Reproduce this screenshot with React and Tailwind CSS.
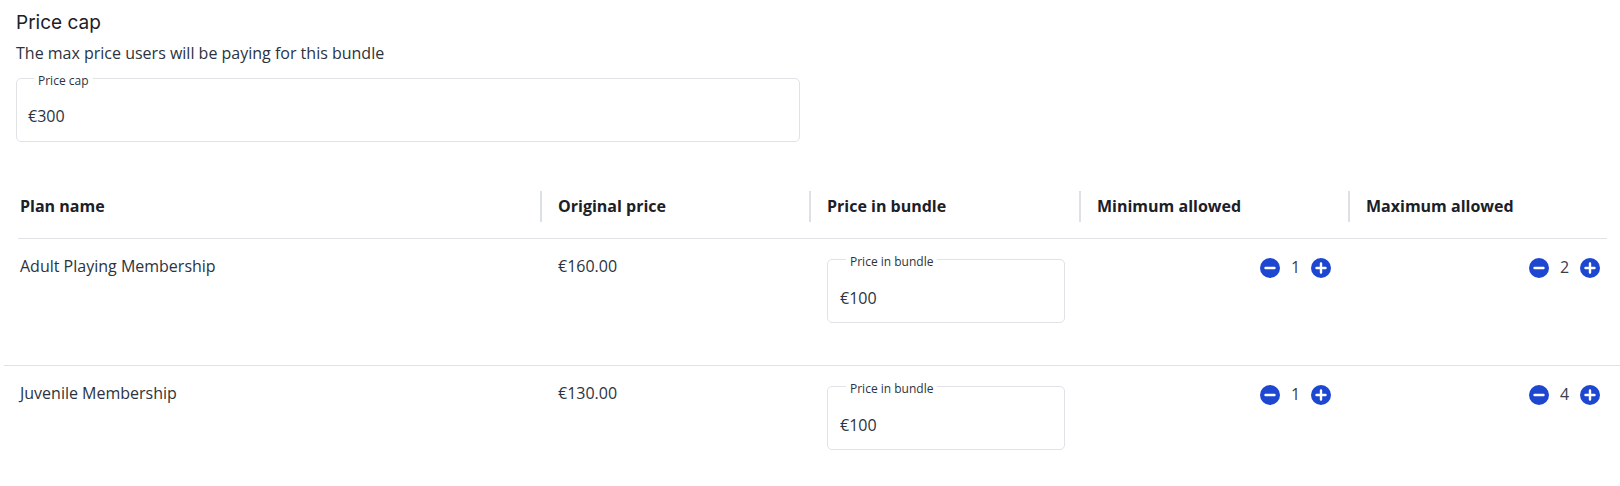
import React from "react";

const body = "font-['Open_Sans',sans-serif]";

function PriceField({ label, value, className, inset }) {
  return (
    <fieldset className={`border border-[#e0e2e6] rounded-[5px] m-0 h-[71px] ${inset ? "px-[12px]" : "px-[11px]"} ${className}`}>
      <legend className="ml-[6px] px-[4px] text-[12px] leading-[14px] text-[#2b3340]">
        <span className="relative top-[3px]">{label}</span>
      </legend>
      <div className={`${inset ? "pt-[22px]" : "pt-[21px]"} text-[16px] leading-[20px] text-[#2b3340]`}>{value}</div>
    </fieldset>
  );
}

function RoundButton({ plus }) {
  return (
    <svg width="20" height="20" viewBox="0 0 20 20" className="shrink-0">
      <circle cx="10" cy="10" r="10" fill="#1d47d1" />
      <path d={plus ? "M5.5 10h9M10 5.5v9" : "M5.5 10h9"} stroke="#fff" strokeWidth="2.4" strokeLinecap="round" />
    </svg>
  );
}

function Stepper({ value, className }) {
  return (
    <div className={`flex items-center justify-end ${className}`}>
      <RoundButton />
      <span className="w-[31px] text-center text-[16px] leading-[20px] text-[#3a404a] -mt-[3px]">{value}</span>
      <RoundButton plus />
    </div>
  );
}

function HeaderCell({ children, first }) {
  return (
    <div className={`h-[31px] flex items-center font-bold text-[16px] text-[#1c2027] ${first ? "pl-[2px]" : "pl-[16px] border-l-2 border-[#dde0e5]"}`}>
      <span className="-mt-[2px]">{children}</span>
    </div>
  );
}

const plans = [
  { name: "Adult Playing Membership", price: "€160.00", min: 1, max: 2 },
  { name: "Juvenile Membership", price: "€130.00", min: 1, max: 4 },
];

const cols = "grid grid-cols-[522px_269px_270px_269px_259px]";

export default function App() {
  return (
    <div className={`h-[486px] w-[1620px] bg-white overflow-hidden ${body}`}>
      <div className="pl-[16px] pt-[11px] w-[800px]">
        <h2 className="font-['Inter',sans-serif] font-normal text-[19px] leading-[24px] text-[#1c2027]">Price cap</h2>
        <p className="mt-[8px] text-[16px] leading-[20px] text-[#2b3340]">The max price users will be paying for this bundle</p>
        <PriceField label="Price cap" value="€300" className="mt-[8px]" />
      </div>

      <div className="ml-[18px] mr-[13px] mt-[49px] border-b border-[#e0e2e6]">
        <div className={`${cols} pb-[16px]`}>
          <HeaderCell first>Plan name</HeaderCell>
          <HeaderCell>Original price</HeaderCell>
          <HeaderCell>Price in bundle</HeaderCell>
          <HeaderCell>Minimum allowed</HeaderCell>
          <HeaderCell>Maximum allowed</HeaderCell>
        </div>
      </div>

      {plans.map((plan, i) => (
        <div key={plan.name} className={i === 0 ? "ml-[18px] mr-[13px] h-[126px]" : "border-t border-[#e0e2e6] ml-[4px] pl-[14px] pr-[13px]"}>
          <div className={`${cols} pt-[17px] text-[16px] leading-[20px] text-[#2b3340]`}>
            <div className="pl-[2px]">{plan.name}</div>
            <div className="pl-[18px]">{plan.price}</div>
            <div className="pl-[18px] pr-[14px]">
              <PriceField inset label="Price in bundle" value="€100" className="-mt-[4px]" />
            </div>
            <Stepper value={plan.min} className="pr-[17px] h-[20px] mt-[2px]" />
            <Stepper value={plan.max} className="pr-[7px] h-[20px] mt-[2px]" />
          </div>
        </div>
      ))}
    </div>
  );
}
